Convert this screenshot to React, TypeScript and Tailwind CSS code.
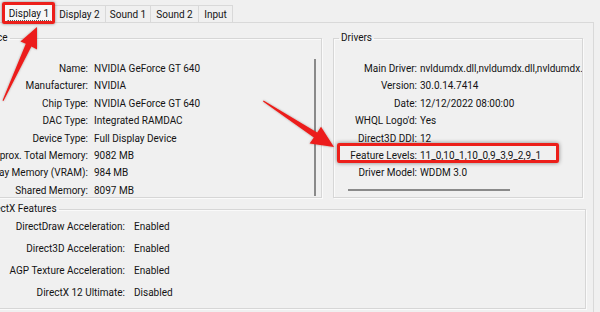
import React from 'react';

type Row = [string, string];

const deviceRows: Row[] = [
  ['Name:', 'NVIDIA GeForce GT 640'],
  ['Manufacturer:', 'NVIDIA'],
  ['Chip Type:', 'NVIDIA GeForce GT 640'],
  ['DAC Type:', 'Integrated RAMDAC'],
  ['Device Type:', 'Full Display Device'],
  ['Approx. Total Memory:', '9082 MB'],
  ['Display Memory (VRAM):', '984 MB'],
  ['Shared Memory:', '8097 MB'],
];

const driverRows: Row[] = [
  ['Main Driver:', 'nvldumdx.dll,nvldumdx.dll,nvldumdx.dll,nvldumdx.dll'],
  ['Version:', '30.0.14.7414'],
  ['Date:', '12/12/2022 08:00:00'],
  ["WHQL Logo'd:", 'Yes'],
  ['Direct3D DDI:', '12'],
  ['Feature Levels:', '11_0,10_1,10_0,9_3,9_2,9_1'],
  ['Driver Model:', 'WDDM 3.0'],
];

const featureRows: Row[] = [
  ['DirectDraw Acceleration:', 'Enabled'],
  ['Direct3D Acceleration:', 'Enabled'],
  ['AGP Texture Acceleration:', 'Enabled'],
  ['DirectX 12 Ultimate:', 'Disabled'],
];

const tabs = [
  { label: 'Display 1', w: 'w-[50px]' },
  { label: 'Display 2', w: 'w-[52px]' },
  { label: 'Sound 1', w: 'w-[45px]' },
  { label: 'Sound 2', w: 'w-[48px]' },
  { label: 'Input', w: 'w-[34px]' },
];

function Arrows() {
  return (
    <svg
      className="absolute inset-0 pointer-events-none"
      width="600"
      height="312"
      viewBox="0 0 600 312"
    >
      <defs>
        <filter id="sh" x="-20%" y="-20%" width="140%" height="140%">
          <feDropShadow dx="0" dy="0" stdDeviation="0.8" floodColor="#000" floodOpacity="0.35" />
        </filter>
      </defs>
      {/* arrow to the Display 1 tab */}
      <polygon
        filter="url(#sh)"
        fill="#ec1f1a"
        points="37,27 37,49.5 31.4,46.6 3.5,101 2.5,100.6 25.8,43.8 20.4,41.4"
      />
      {/* arrow to Feature Levels */}
      <polygon
        filter="url(#sh)"
        fill="#ec1f1a"
        points="334,147 309.6,143.4 313.8,137.6 263,101.6 263.6,100.6 317.2,132.4 321,126.7"
      />
    </svg>
  );
}

function Fieldset({
  title,
  className,
  children,
}: {
  title: string;
  className: string;
  children: React.ReactNode;
}) {
  return (
    <fieldset
      className={`min-w-0 shrink-0 border border-[#d6d6d6] shadow-[inset_1px_1px_0_#fafafa,1px_1px_0_#fafafa] ${className}`}
    >
      <legend className="ml-[5px] px-[2px] leading-[12px] whitespace-nowrap">{title}</legend>
      {children}
    </fieldset>
  );
}

export default function App() {
  return (
    <div className="relative w-[600px] h-[312px] overflow-hidden bg-[#f0f0f0] text-[10px] text-[#141414] font-['Roboto',sans-serif]">
      {/* tab strip */}
      <div className="relative z-10 h-[22px] flex items-end pl-[4px]">
        {tabs.map((t, i) =>
          i === 0 ? (
            <div
              key={t.label}
              className={`relative ${t.w} h-[20px] -mb-px bg-[#f7f7f7] border border-b-0 border-[#d6d6d6] flex items-center justify-center`}
            >
              <span className="px-[1px] leading-[13px] border border-dotted border-[#555] border-t-transparent border-x-transparent">
                {t.label}
              </span>
              <div className="absolute -left-[3px] -top-[2px] w-[53px] h-[22px] border-[3px] border-[#ec1f1a] rounded-[2px] shadow-[0_0_3px_rgba(0,0,0,0.45)]" />
            </div>
          ) : (
            <div
              key={t.label}
              className={`${t.w} h-[17px] border border-b-0 border-l-0 border-[#d9d9d9] bg-[#f0f0f0] flex items-center justify-center`}
            >
              {t.label}
            </div>
          ),
        )}
      </div>

      {/* tab page */}
      <div className="w-[594px] h-[290px] border-t border-r border-[#d9d9d9] bg-[#f0f0f0]">
        <div className="flex gap-[11px] mt-[9px]">
          <Fieldset title="Device" className="-ml-[30px] w-[352px] h-[166px]">
            <div className="flex h-[152px]">
              <div className="flex-1 pt-[16px]">
                {deviceRows.map(([k, v]) => (
                  <div key={k} className="flex h-[17.4px] leading-[17.4px] whitespace-nowrap">
                    <span className="w-[117px] text-right shrink-0">{k}</span>
                    <span className="ml-[6px]">{v}</span>
                  </div>
                ))}
              </div>
              <div className="w-[2px] mt-[15px] mr-[5px] bg-[#8a8a8a]" />
            </div>
          </Fieldset>

          <Fieldset title="Drivers" className="w-[250px] h-[166px] overflow-hidden">
            <div className="pt-[16px]">
              {driverRows.map(([k, v]) => (
                <div key={k} className="relative flex h-[17.4px] leading-[17.4px] whitespace-nowrap">
                  <span className="w-[83px] text-right shrink-0">{k}</span>
                  <span className="ml-[3px]">{v}</span>
                  {k === 'Feature Levels:' && (
                    <div className="absolute left-[3px] -top-[4px] w-[222px] h-[20px] border-[3px] border-[#ec1f1a] rounded-[2px] shadow-[0_0_4px_rgba(0,0,0,0.45)]" />
                  )}
                </div>
              ))}
              <div className="ml-[14px] mt-[7px] w-[162px] h-[2px] bg-[#8a8a8a]" />
            </div>
          </Fieldset>
        </div>

        <Fieldset title="DirectX Features" className="-ml-[25px] mt-[5px] w-[611px] h-[106px]">
          <div className="pt-[1px]">
            {featureRows.map(([k, v]) => (
              <div key={k} className="flex h-[22px] leading-[22px] whitespace-nowrap">
                <span className="w-[149px] text-right shrink-0">{k}</span>
                <span className="ml-[9px]">{v}</span>
              </div>
            ))}
          </div>
        </Fieldset>
      </div>

      <Arrows />
    </div>
  );
}
